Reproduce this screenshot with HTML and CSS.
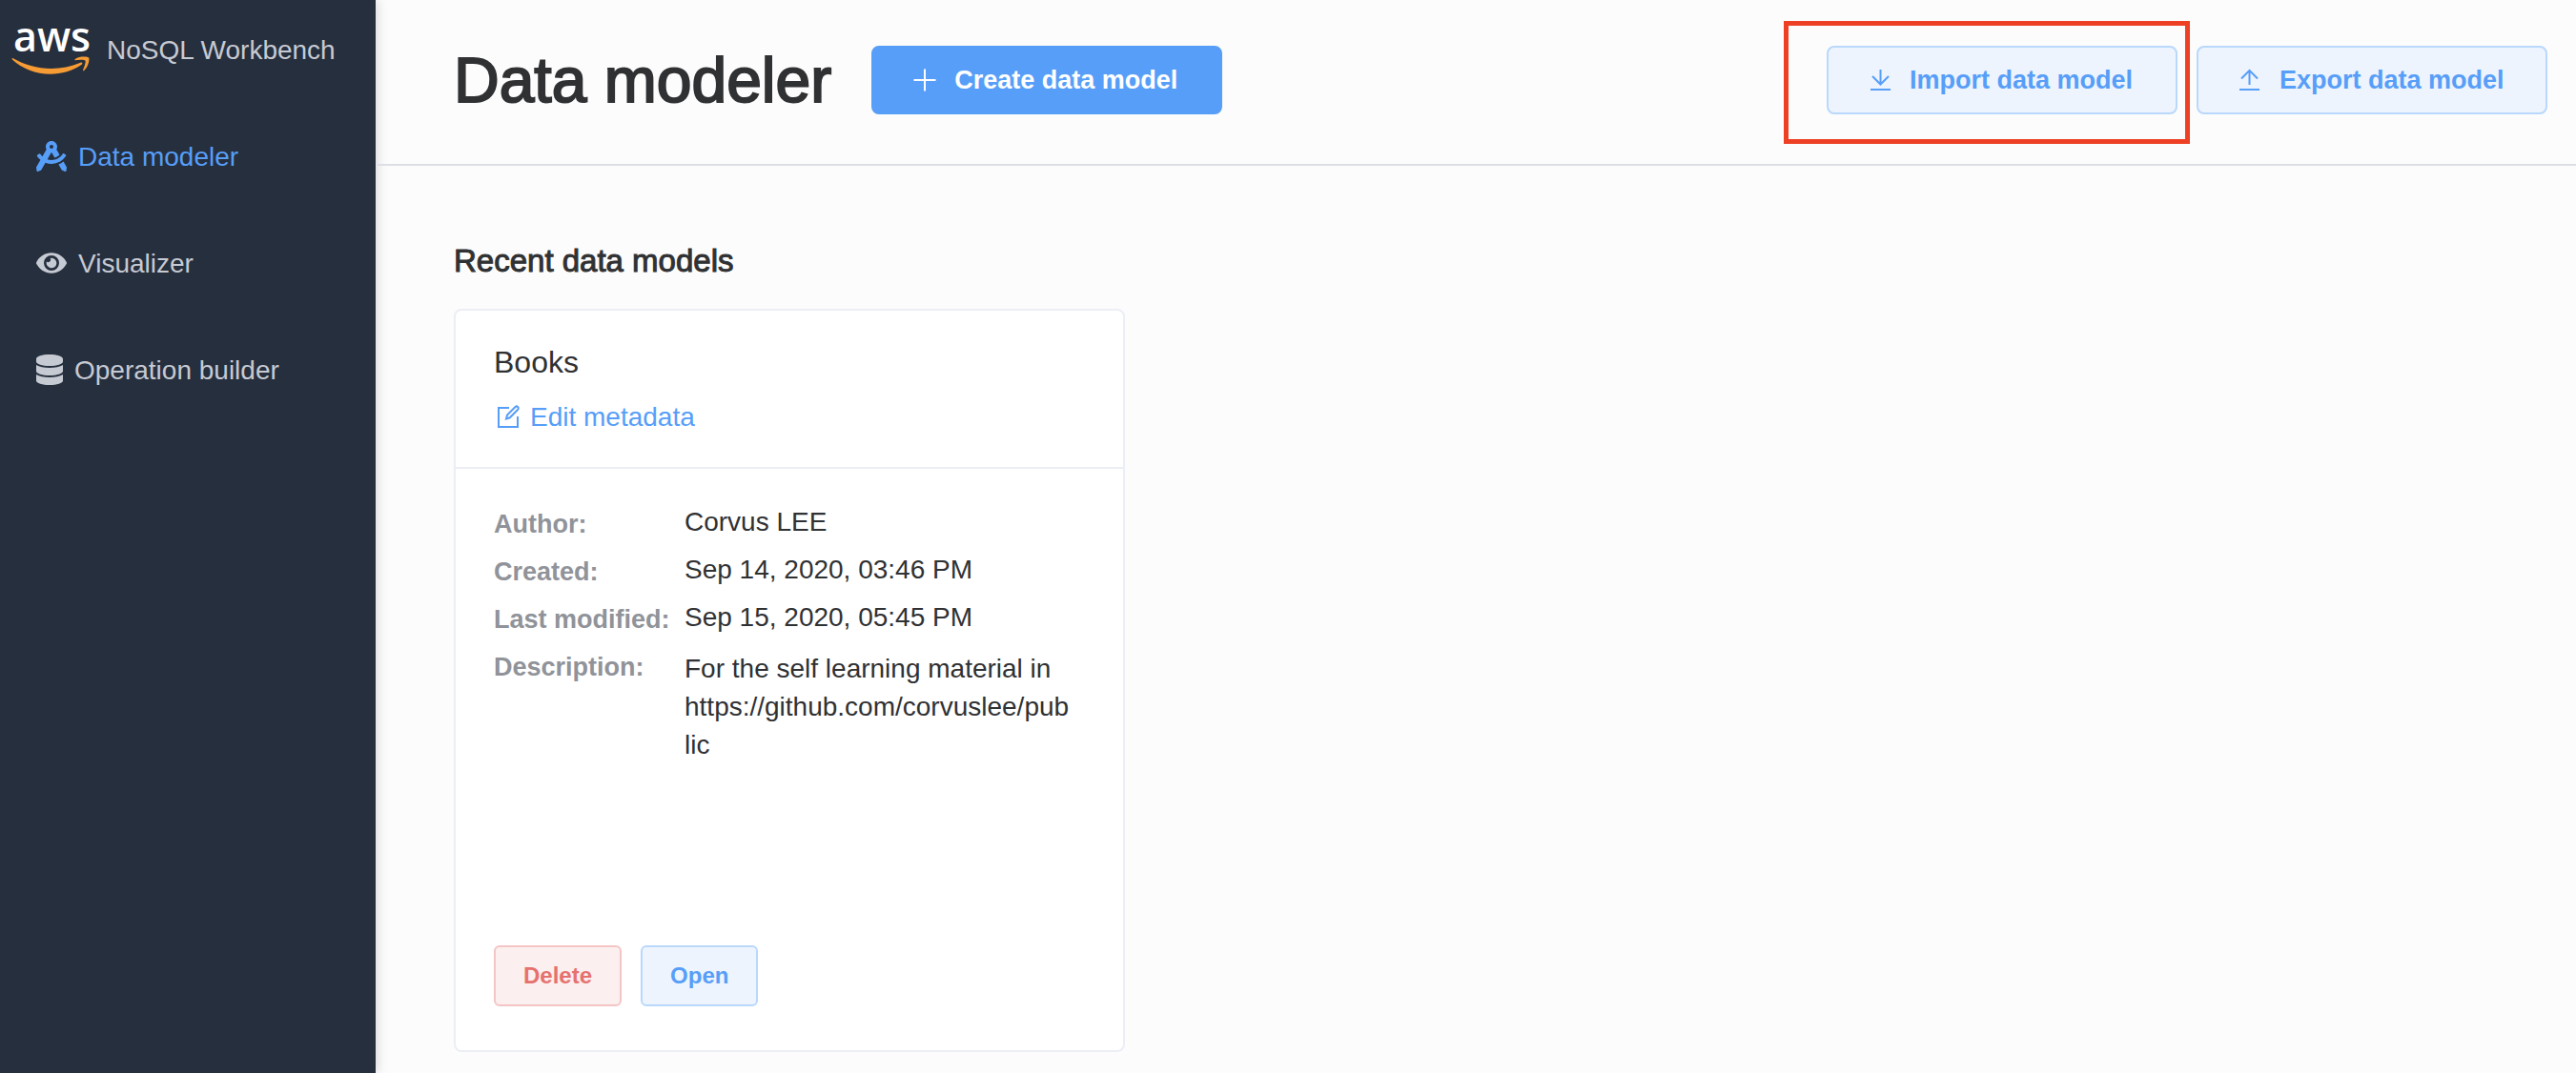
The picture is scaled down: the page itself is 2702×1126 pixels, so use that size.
FILE: index.html
```html
<!DOCTYPE html>
<html lang="en">
<head>
<meta charset="utf-8">
<meta name="viewport" content="width=device-width, initial-scale=1">
<title>NoSQL Workbench</title>
<link rel="stylesheet" href="styles.css">
</head>
<body>
<div class="app">
  <aside class="sidebar">
    <div class="brand">
      <svg class="brand-logo" viewBox="0 0 304 182" role="img" aria-label="aws">
        <text class="brand-word" x="7" y="94">aws</text>
        <g fill="#f79c34">
          <path d="M273.5 143.7c-32.9 24.3-80.7 37.2-121.8 37.2-57.6 0-109.5-21.3-148.7-56.7-3.1-2.8-.3-6.6 3.4-4.4 42.4 24.6 94.7 39.5 148.8 39.5 36.5 0 76.6-7.6 113.5-23.2 5.5-2.5 10.2 3.6 4.8 7.6z"/>
          <path d="M287.2 128.1c-4.2-5.4-27.8-2.6-38.5-1.3-3.2.4-3.7-2.4-.8-4.5 18.8-13.2 49.7-9.4 53.3-5 3.6 4.5-1 35.4-18.6 50.2-2.7 2.3-5.3 1.1-4.1-1.9 4-9.9 12.9-32.2 8.7-37.5z"/>
        </g>
      </svg>
      <span>NoSQL Workbench</span>
    </div>
    <nav class="nav">
      <a class="nav-link active" href="#modeler" aria-current="page">
        <svg class="nav-icon" viewBox="0 0 512 512" aria-hidden="true"><path d="M457.01 344.42c-25.05 20.33-52.63 37.18-82.54 49.05l54.38 94.19 53.95 23.04c9.81 4.19 20.89-2.21 22.17-12.8l7.02-58.25-54.98-95.23zm42.49-94.56c4.86-7.67 1.89-17.99-6.05-22.39l-28.07-15.57c-7.48-4.15-16.61-1.46-21.26 5.72C403.01 281.15 332.25 320 256 320c-23.93 0-47.23-4.25-69.41-11.53l67.36-116.68c.7.02 1.34.21 2.04.21s1.35-.19 2.04-.21l51.09 88.5c31.23-8.96 59.56-25.75 82.61-48.92l-51.79-89.71C347.39 128.03 352 112.63 352 96c0-53.02-42.98-96-96-96s-96 42.98-96 96c0 16.63 4.61 32.03 12.05 45.66l-68.3 118.31c-12.55-11.61-23.96-24.59-33.68-39-4.79-7.1-13.97-9.62-21.38-5.33l-27.75 16.07c-7.85 4.54-10.63 14.9-5.64 22.47 15.57 23.64 34.69 44.21 55.98 62.02L0 439.66l7.02 58.25c1.28 10.59 12.36 16.99 22.17 12.8l53.95-23.04 70.8-122.63C186.13 377.28 220.62 384 256 384c99.05 0 190.88-51.01 243.5-134.14zM256 64c17.67 0 32 14.33 32 32s-14.33 32-32 32-32-14.33-32-32 14.33-32 32-32z"/></svg>
        <span>Data modeler</span>
      </a>
      <a class="nav-link" href="#visualizer">
        <svg class="nav-icon" viewBox="0 0 576 512" aria-hidden="true"><path d="M572.52 241.4C518.29 135.59 410.93 64 288 64S57.68 135.64 3.48 241.41a32.35 32.35 0 0 0 0 29.19C57.71 376.41 165.07 448 288 448s230.32-71.64 284.52-177.41a32.35 32.35 0 0 0 0-29.19zM288 400a144 144 0 1 1 144-144 143.93 143.93 0 0 1-144 144zm0-240a95.31 95.31 0 0 0-25.31 3.79 47.85 47.85 0 0 1-66.9 66.9A95.78 95.78 0 1 0 288 160z"/></svg>
        <span>Visualizer</span>
      </a>
      <a class="nav-link" href="#operations">
        <svg class="nav-icon narrow" viewBox="0 0 448 512" aria-hidden="true"><path d="M448 73.143v45.714C448 159.143 347.667 192 224 192S0 159.143 0 118.857V73.143C0 32.857 100.333 0 224 0s224 32.857 224 73.143zM448 176v102.857C448 319.143 347.667 352 224 352S0 319.143 0 278.857V176c48.125 33.143 136.208 48.572 224 48.572S399.874 209.143 448 176zm0 160v102.857C448 479.143 347.667 512 224 512S0 479.143 0 438.857V336c48.125 33.143 136.208 48.572 224 48.572S399.874 369.143 448 336z"/></svg>
        <span>Operation builder</span>
      </a>
    </nav>
  </aside>

  <div class="main">
    <header class="topbar">
      <h1 class="title">Data modeler</h1>
      <button class="btn btn-primary btn-large" type="button">
        <svg class="btn-icon" viewBox="0 0 28 28" aria-hidden="true"><path d="M14 2.500v23M2.500 14h23"/></svg>
        <span>Create data model</span>
      </button>
      <div class="actions">
        <div class="highlighted">
          <button class="btn btn-plain btn-large" type="button">
            <svg class="btn-icon" viewBox="0 0 28 28" aria-hidden="true"><path d="M14.500 3v15M6 10l8.500 8.500L23 10M4 24h21"/></svg>
            <span>Import data model</span>
          </button>
        </div>
        <button class="btn btn-plain btn-large" type="button">
          <svg class="btn-icon" viewBox="0 0 28 28" aria-hidden="true"><path d="M13.500 19V4M5 12.500L13.500 4l8.500 8.500M3 24h21"/></svg>
          <span>Export data model</span>
        </button>
      </div>
    </header>

    <main class="content">
      <h2 class="section-title">Recent data models</h2>
      <article class="card">
        <div class="card-head">
          <h3 class="card-title">Books</h3>
          <a class="edit-link" href="#edit">
            <svg class="edit-icon" viewBox="0 0 28 28" aria-hidden="true"><path d="M16 4H5V24H25V13M13 15.500l1-4L22.500 3a1.900 1.900 0 0 1 2.700 2.700L16.800 14.300z"/></svg>
            <span>Edit metadata</span>
          </a>
        </div>
        <div class="card-body">
          <dl class="details">
            <dt>Author:</dt><dd>Corvus LEE</dd>
            <dt>Created:</dt><dd>Sep 14, 2020, 03:46 PM</dd>
            <dt>Last modified:</dt><dd>Sep 15, 2020, 05:45 PM</dd>
            <dt>Description:</dt><dd class="description">For the self learning material in https://github.com/corvuslee/public</dd>
          </dl>
          <div class="card-actions">
            <button class="btn btn-small btn-danger" type="button">Delete</button>
            <button class="btn btn-small btn-plain" type="button">Open</button>
          </div>
        </div>
      </article>
    </main>
  </div>
</div>
</body>
</html>
```
FILE: styles.css
```css
* {
  box-sizing: border-box;
}

body {
  margin: 0;
  background: #fcfcfc;
  color: #303133;
  font-family: "Liberation Sans", Arial, sans-serif;
  font-size: 28px;
  line-height: 40px;
}

h1, h2, h3, dl, dd {
  margin: 0;
}

.app {
  display: flex;
  min-height: 100vh;
}

/* Sidebar */
.sidebar {
  flex: 0 0 394px;
  background: #262f3e;
  color: #c6cad3;
  box-shadow: 0 0 12px rgba(0, 0, 0, 0.2);
}

.brand {
  display: flex;
  align-items: center;
  gap: 18px;
  height: 108px;
  padding: 0 0 2px 12px;
}

.brand-logo {
  width: 82px;
  height: 49px;
  overflow: visible;
}

.brand-word {
  fill: #fff;
  font-family: "Open Sans", "Noto Sans", sans-serif;
  font-size: 160px;
  font-weight: 600;
}

.nav-link {
  display: flex;
  align-items: center;
  gap: 12px;
  height: 112px;
  padding-left: 38px;
  color: inherit;
  text-decoration: none;
}

.nav-link span {
  padding-top: 2px;
}

.nav-link.active {
  color: #579ef8;
}

.nav-icon {
  width: 32px;
  height: 32px;
  fill: currentColor;
}

.nav-icon.narrow {
  width: 28px;
}

/* Top bar */
.main {
  flex: 1;
  min-width: 0;
}

.topbar {
  display: flex;
  align-items: center;
  height: 174px;
  margin-left: 2px;
  padding: 0 30px 4px 80px;
  border-bottom: 2px solid #dcdfe6;
}

.title {
  margin-right: 42px;
  font-size: 66px;
  line-height: 80px;
  font-weight: 400;
  white-space: nowrap;
  -webkit-text-stroke: 2px currentColor;
}

.actions {
  display: flex;
  gap: 20px;
  margin-left: auto;
}

.btn {
  display: flex;
  align-items: center;
  border: 2px solid;
  border-radius: 8px;
  font-family: inherit;
  font-weight: 700;
  line-height: 40px;
  white-space: nowrap;
  cursor: pointer;
}

.btn-large {
  gap: 17px;
  min-width: 368px;
  height: 72px;
  padding: 0 40px;
  font-size: 27px;
}

.btn-small {
  height: 64px;
  padding: 0 29px;
  border-radius: 6px;
  font-size: 24px;
}

.btn-primary {
  border-color: #579ef8;
  background: #579ef8;
  color: #fff;
}

.btn-plain {
  border-color: #b9d8fc;
  background: #edf4fe;
  color: #579ef8;
}

.btn-danger {
  border-color: #f4c5c4;
  background: #fcefef;
  color: #e5726e;
}

.btn-icon,
.edit-icon {
  width: 28px;
  height: 28px;
  fill: none;
  stroke: currentColor;
  stroke-width: 2;
}

/* Red frame drawn around the import button */
.highlighted {
  position: relative;
}

.highlighted::after {
  content: "";
  position: absolute;
  inset: -26px -13px -31px -45px;
  border: 5px solid #ee4024;
  pointer-events: none;
}

/* Content */
.content {
  padding: 80px 82px 20px;
}

.section-title {
  margin-bottom: 30px;
  font-size: 33px;
  font-weight: 400;
  -webkit-text-stroke: 1px currentColor;
}

.card {
  display: flex;
  flex-direction: column;
  max-width: 704px;
  min-height: 780px;
  border: 2px solid #ebeef5;
  border-radius: 8px;
  background: #fff;
}

.card-head {
  padding: 34px 40px 32px;
  border-bottom: 2px solid #ebeef5;
}

.card-title {
  margin-bottom: 18px;
  font-size: 32px;
  font-weight: 400;
}

.edit-link {
  display: flex;
  align-items: center;
  gap: 10px;
  width: fit-content;
  color: #579ef8;
  text-decoration: none;
}

.card-body {
  display: flex;
  flex: 1;
  flex-direction: column;
  justify-content: space-between;
  padding: 38px 40px 46px;
}

.details {
  display: grid;
  grid-template-columns: 184px 1fr;
  gap: 10px 16px;
}

.details dt {
  color: #909399;
  font-size: 27px;
  font-weight: 700;
  white-space: nowrap;
}

.details dd {
  line-height: 36px;
}

.details .description {
  padding: 2px 16px 0 0;
  line-height: 40px;
  overflow-wrap: anywhere;
}

.card-actions {
  display: flex;
  gap: 20px;
}
```
